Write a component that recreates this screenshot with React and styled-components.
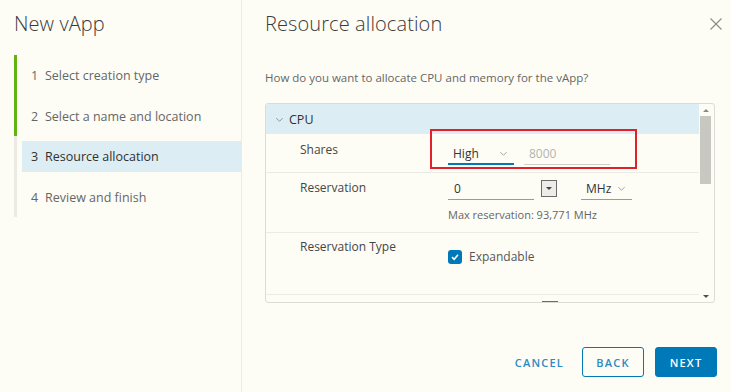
import styled, { createGlobalStyle } from 'styled-components';

const GlobalStyle = createGlobalStyle`
  html, body {
    margin: 0;
    padding: 0;
    background: #fdfdf6;
  }
  body {
    font-family: 'Open Sans', 'Liberation Sans', sans-serif;
    color: #565656;
  }
  * {
    box-sizing: border-box;
  }
`;

const Page = styled.div`
  width: 731px;
  height: 392px;
  display: flex;
  background: #fdfdf6;
  overflow: hidden;
`;

const Sidebar = styled.div`
  width: 242px;
  flex-shrink: 0;
  border-right: 1px solid #ebebe4;
  padding: 11px 0 0 14px;
`;

const Title = styled.h1`
  margin: 0;
  font-size: 20px;
  font-weight: 300;
  line-height: 26px;
  color: #3a3a3a;
  letter-spacing: 0.1px;
`;

const Steps = styled.ol`
  list-style: none;
  margin: 18px 0 0;
  padding: 0;
`;

const Step = styled.li`
  height: 40.5px;
  padding: 5px 0 4px 5px;
  border-left: 3px solid ${(p) => (p.done ? '#60b515' : '#ebebe4')};
`;

const StepInner = styled.div`
  height: 31px;
  display: flex;
  align-items: center;
  padding-left: 9px;
  font-size: 12.5px;
  color: ${(p) => (p.active ? '#313131' : '#666')};
  background: ${(p) => (p.active ? '#dcedf4' : 'transparent')};
`;

const StepNum = styled.span`
  width: 14px;
`;

const Main = styled.div`
  flex: 1;
  display: flex;
  flex-direction: column;
  padding: 11px 14px 15px 23px;
`;

const Header = styled.div`
  display: flex;
  justify-content: space-between;
  align-items: flex-start;
`;

const Close = styled.button`
  border: none;
  background: none;
  padding: 0;
  margin: 6px -6px 0 0;
  width: 14px;
  height: 14px;
  cursor: pointer;
`;

const Question = styled.p`
  margin: 33px 0 0;
  font-size: 11.5px;
  color: #666;
`;

const Box = styled.div`
  margin-top: 18px;
  height: 200px;
  width: 450px;
  border: 1px solid #dcdcd6;
  border-radius: 3px;
  display: flex;
  overflow: hidden;
`;

const Rows = styled.div`
  flex: 1;
  overflow: hidden;
`;

const GroupHeader = styled.div`
  height: 30px;
  display: flex;
  align-items: center;
  gap: 5px;
  padding-left: 9px;
  background: #dcedf4;
  font-size: 12.5px;
  color: #313131;
`;

const Row = styled.div`
  display: grid;
  grid-template-columns: 148px 1fr;
  padding-left: 34px;
  height: ${(p) => p.h}px;
  border-bottom: 1px solid #ebebe4;
`;

const Label = styled.div`
  padding-top: ${(p) => p.top || 7}px;
  font-size: 12px;
  line-height: 16px;
  color: #454545;
`;

const Controls = styled.div`
  display: flex;
  flex-direction: column;
  padding-top: ${(p) => p.top || 0}px;
`;

const Line = styled.div`
  display: flex;
  align-items: flex-end;
  gap: ${(p) => p.gap || 10}px;
`;

const Select = styled.div`
  width: ${(p) => p.w}px;
  height: 22px;
  display: flex;
  align-items: center;
  justify-content: space-between;
  padding: 0 6px 0 5px;
  margin-left: ${(p) => p.ml || 0}px;
  font-size: 12px;
  color: #333;
  border-bottom: ${(p) => (p.focus ? '2px solid #0079b8' : '1px solid #9a9a9a')};
`;

const Input = styled.div`
  width: ${(p) => p.w}px;
  height: 22px;
  display: flex;
  align-items: center;
  padding-left: ${(p) => p.pl || 5}px;
  font-size: 12px;
  color: ${(p) => (p.muted ? '#b4b4b0' : '#333')};
  border-bottom: 1px solid ${(p) => (p.muted ? '#cfcfca' : '#9a9a9a')};
`;

const SpinButton = styled.div`
  width: 16px;
  height: 17px;
  margin-bottom: 3px;
  border: 1px solid #6b6b6b;
  background: #ecece8;
  display: flex;
  align-items: center;
  justify-content: center;
`;

const Hint = styled.div`
  margin-top: 7px;
  font-size: 11px;
  color: #666;
`;

const Check = styled.label`
  display: flex;
  align-items: center;
  gap: 7px;
  font-size: 12px;
  color: #565656;
`;

const Box14 = styled.span`
  width: 14px;
  height: 14px;
  border-radius: 3px;
  background: #0079b8;
  display: flex;
  align-items: center;
  justify-content: center;
`;

const Highlight = styled.div`
  position: absolute;
  left: 164px;
  top: -5px;
  width: 207px;
  height: 40px;
  border: 2px solid #e0202a;
  pointer-events: none;
`;

const RowWrap = styled.div`
  position: relative;
`;

const PartialRow = styled.div`
  padding-left: 276px;
  padding-top: 6px;
`;

const Stub = styled.div`
  width: 16px;
  height: 4px;
  border: 1px solid #6b6b6b;
  border-bottom: none;
  background: #c8c8c2;
`;

const Scrollbar = styled.div`
  width: 15px;
  display: flex;
  flex-direction: column;
  align-items: center;
  padding: 5px 2px 4px 0;
`;

const Thumb = styled.div`
  width: 11px;
  height: 68px;
  margin-top: 4px;
  background: #c7c8c2;
`;

const Arrow = styled.div`
  width: 0;
  height: 0;
  border-left: 3px solid transparent;
  border-right: 3px solid transparent;
  ${(p) => (p.up ? 'border-bottom: 3px solid #8a8a8a;' : 'border-top: 3px solid #505050;')}
  margin-top: ${(p) => (p.up ? 0 : 'auto')};
`;

const Footer = styled.div`
  margin-top: auto;
  display: flex;
  justify-content: flex-end;
  align-items: center;
  gap: 11px;
`;

const Button = styled.button`
  height: 30px;
  min-width: ${(p) => (p.kind === 'link' ? 0 : '62px')};
  padding: ${(p) => (p.kind === 'link' ? 0 : '0 12px')};
  border-radius: 3px;
  font-family: 'Open Sans', 'Liberation Sans', sans-serif;
  font-size: 11px;
  font-weight: 600;
  letter-spacing: 1.2px;
  cursor: pointer;
  border: 1px solid ${(p) => (p.kind === 'link' ? 'transparent' : '#0079b8')};
  background: ${(p) => (p.kind === 'primary' ? '#0079b8' : 'transparent')};
  color: ${(p) => (p.kind === 'primary' ? '#fff' : '#2b8ac2')};
  margin-right: ${(p) => (p.kind === 'link' ? '6px' : 0)};
`;

const Chevron = ({ color = '#9a9a9a', size = 9 }) => (
  <svg width={size} height={size} viewBox="0 0 10 10">
    <path d="M1.5 3.5 L5 7 L8.5 3.5" fill="none" stroke={color} strokeWidth="1" />
  </svg>
);

const steps = [
  { n: 1, label: 'Select creation type', done: true },
  { n: 2, label: 'Select a name and location', done: true },
  { n: 3, label: 'Resource allocation', active: true },
  { n: 4, label: 'Review and finish' },
];

const App = () => (
  <>
    <GlobalStyle />
    <Page>
      <Sidebar>
        <Title>New vApp</Title>
        <Steps>
          {steps.map((s) => (
            <Step key={s.n} done={s.done}>
              <StepInner active={s.active}>
                <StepNum>{s.n}</StepNum>
                {s.label}
              </StepInner>
            </Step>
          ))}
        </Steps>
      </Sidebar>
      <Main>
        <Header>
          <Title>Resource allocation</Title>
          <Close aria-label="Close">
            <svg width="14" height="14" viewBox="0 0 14 14">
              <path d="M1.5 1.5 L12.5 12.5 M12.5 1.5 L1.5 12.5" stroke="#8c8c8c" strokeWidth="1.2" />
            </svg>
          </Close>
        </Header>
        <Question>How do you want to allocate CPU and memory for the vApp?</Question>
        <Box>
          <Rows>
            <GroupHeader>
              <Chevron color="#8a8a8a" />
              CPU
            </GroupHeader>
            <RowWrap>
              <Row h={39}>
                <Label top={8}>Shares</Label>
                <Controls top={9}>
                  <Line gap={10}>
                    <Select w={66} focus>
                      High
                      <Chevron />
                    </Select>
                    <Input w={86} muted>8000</Input>
                  </Line>
                </Controls>
              </Row>
              <Highlight />
            </RowWrap>
            <Row h={60}>
              <Label top={7}>Reservation</Label>
              <Controls top={5}>
                <Line gap={7}>
                  <Input w={86} pl={6}>0</Input>
                  <SpinButton>
                    <svg width="6" height="4" viewBox="0 0 6 4">
                      <path d="M0 0 L6 0 L3 3 Z" fill="#444" />
                    </svg>
                  </SpinButton>
                  <Select w={51} ml={17}>
                    MHz
                    <Chevron />
                  </Select>
                </Line>
                <Hint>Max reservation: 93,771 MHz</Hint>
              </Controls>
            </Row>
            <Row h={62}>
              <Label top={6}>Reservation Type</Label>
              <Controls top={15}>
                <Check>
                  <Box14>
                    <svg width="10" height="10" viewBox="0 0 10 10">
                      <path d="M2 5.2 L4.2 7.3 L8 2.8" fill="none" stroke="#fff" strokeWidth="1.6" />
                    </svg>
                  </Box14>
                  Expandable
                </Check>
              </Controls>
            </Row>
            <PartialRow>
              <Stub />
            </PartialRow>
          </Rows>
          <Scrollbar>
            <Arrow up />
            <Thumb />
            <Arrow />
          </Scrollbar>
        </Box>
        <Footer>
          <Button kind="link">CANCEL</Button>
          <Button>BACK</Button>
          <Button kind="primary">NEXT</Button>
        </Footer>
      </Main>
    </Page>
  </>
);

export default App;
